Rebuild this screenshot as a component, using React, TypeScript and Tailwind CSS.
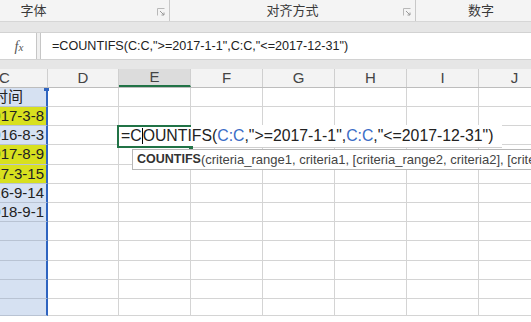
const FONT = "font-['Liberation_Sans','Noto_Sans_CJK_SC',sans-serif]";

// widths of the columns after C
const COLS = [
  { name: "D", w: "w-[71px]" },
  { name: "E", w: "w-[72px]" },
  { name: "F", w: "w-[72px]" },
  { name: "G", w: "w-[72px]" },
  { name: "H", w: "w-[72px]" },
  { name: "I", w: "w-[72px]" },
  { name: "J", w: "w-[72px]" },
];

type Row = { h: string; text: string; yellow?: boolean };

const ROWS: Row[] = [
  { h: "h-[19px]", text: "时间" },
  { h: "h-[19px]", text: "2017-3-8", yellow: true },
  { h: "h-[19px]", text: "2016-8-3" },
  { h: "h-[20px]", text: "2017-8-9", yellow: true },
  { h: "h-[19px]", text: "2017-3-15", yellow: true },
  { h: "h-[19px]", text: "2016-9-14" },
  { h: "h-[19px]", text: "2018-9-1" },
  { h: "h-[19px]", text: "" },
  { h: "h-[20px]", text: "" },
  { h: "h-[19px]", text: "" },
  { h: "h-[19px]", text: "" },
  { h: "h-[17px]", text: "" },
];

function Launcher() {
  return (
    <svg
      width="8"
      height="8"
      viewBox="0 0 8 8"
      className="absolute right-[4px] bottom-[5px]"
    >
      <path d="M0.5 7.5V0.5H7.5" fill="none" stroke="#b8b8b8" strokeWidth="1" />
      <path d="M3 3L7 7M4.5 7H7V4.5" fill="none" stroke="#9a9a9a" strokeWidth="1" />
    </svg>
  );
}

function Ribbon() {
  return (
    <div className="flex h-[22px] bg-[#f4f4f4] border-b border-[#d6d6d6] text-[13px] text-[#3a3a3a]">
      <div className="relative shrink-0 w-[272px] ml-[-102px] flex items-center justify-center border-r border-[#c8c8c8]">
        字体
        <Launcher />
      </div>
      <div className="relative shrink-0 w-[246px] flex items-center justify-center border-r border-[#c8c8c8]">
        对齐方式
        <Launcher />
      </div>
      <div className="shrink-0 w-[130px] flex items-center justify-center">
        数字
      </div>
    </div>
  );
}

function FormulaBar() {
  return (
    <div className="bg-[#e6e6e6] pt-[10px] pb-[9px]">
      <div className="flex h-[28px] bg-[#f0f0f0] border-y border-[#d2d2d2]">
        <div className="w-[37px] shrink-0 flex items-center justify-center bg-white border-r border-[#c6c6c6]">
          <span className="font-['Liberation_Serif',serif] italic text-[14px] text-[#555] pl-[2px]">
            f<span className="text-[11px]">x</span>
          </span>
        </div>
        <div className="ml-[3px] flex-1 flex items-center bg-white border-l border-[#c6c6c6] pl-[11px] text-[12.6px] text-[#222]">
          =COUNTIFS(C:C,"&gt;=2017-1-1",C:C,"&lt;=2017-12-31")
        </div>
      </div>
    </div>
  );
}

function Header() {
  return (
    <div className="flex h-[19px] bg-[#f3f3f3] border-b border-[#bdbdbd] text-[15px] text-[#444]">
      <div className="w-[48px] shrink-0 flex items-center border-r border-[#cfcfcf]">
        <span className="ml-[-1px]">C</span>
      </div>
      {COLS.map((c) =>
        c.name === "E" ? (
          <div
            key={c.name}
            className="w-[72px] shrink-0 flex items-center justify-center bg-[#dcdcdc] border-r border-[#cfcfcf] border-b-2 border-b-[#217346]"
          >
            {c.name}
          </div>
        ) : (
          <div
            key={c.name}
            className={`${c.w} shrink-0 flex items-center justify-center border-r border-[#cfcfcf]`}
          >
            {c.name}
          </div>
        )
      )}
    </div>
  );
}

function GridRow({ row, first }: { row: Row; first: boolean }) {
  return (
    <div className={`flex ${row.h}`}>
      <div
        className={`w-[48px] shrink-0 flex items-center overflow-hidden whitespace-nowrap border-b border-r-2 border-b-[#b9c3d3] border-r-[#2f64c0] text-[15px] text-[#222] ${
          row.yellow ? "bg-[#d8e01f]" : "bg-[#d6e1f2]"
        } ${first ? "justify-start" : "justify-end pr-[2px]"}`}
      >
        {first ? <span className="ml-[-7px]">{row.text}</span> : row.text}
      </div>
      {COLS.map((c) => (
        <div
          key={c.name}
          className={`${c.w} shrink-0 bg-white border-b border-r border-[#d4d4d4]`}
        />
      ))}
    </div>
  );
}

export default function App() {
  return (
    <div className={`w-[531px] h-[322px] overflow-hidden bg-white ${FONT}`}>
      <Ribbon />
      <FormulaBar />
      <div className="relative">
        <Header />
        {ROWS.map((r, i) => (
          <GridRow key={i} row={r} first={i === 0} />
        ))}

        {/* selection handle on column C */}
        <div className="absolute left-[44px] top-[19px] w-[5px] h-[3px] bg-[#2f64c0]" />

        {/* in-cell editor */}
        <div className="absolute left-[117px] top-[56px] w-[385px] h-[23px] bg-white border-b border-[#cfcfcf] flex items-center pl-[4px] text-[15.8px] text-[#222] whitespace-nowrap">
          <span>=C</span>
          <span className="w-px h-[16px] bg-black" />
          <span>OUNTIFS(</span>
          <span className="text-[#3b6cc6]">C:C</span>
          <span>,"&gt;=2017-1-1",</span>
          <span className="text-[#3b6cc6]">C:C</span>
          <span>,"&lt;=2017-12-31")</span>
        </div>
        <div className="absolute left-[117px] top-[56px] w-[74px] h-[23px] border-2 border-r-0 border-[#217346]" />
        <div className="absolute left-[189px] top-[77px] w-[4px] h-[4px] bg-[#217346]" />

        {/* function tooltip */}
        <div className="absolute left-[132px] top-[80px] w-[420px] h-[21px] bg-white border border-[#b8b8b8] flex items-center pl-[4px] text-[13px] text-[#444] whitespace-nowrap">
          <span className="font-bold text-[12.5px] text-[#333]">COUNTIFS</span>
          (criteria_range1, criteria1, [criteria_range2, criteria2], [criteria_range3, ...])
        </div>
      </div>
    </div>
  );
}
